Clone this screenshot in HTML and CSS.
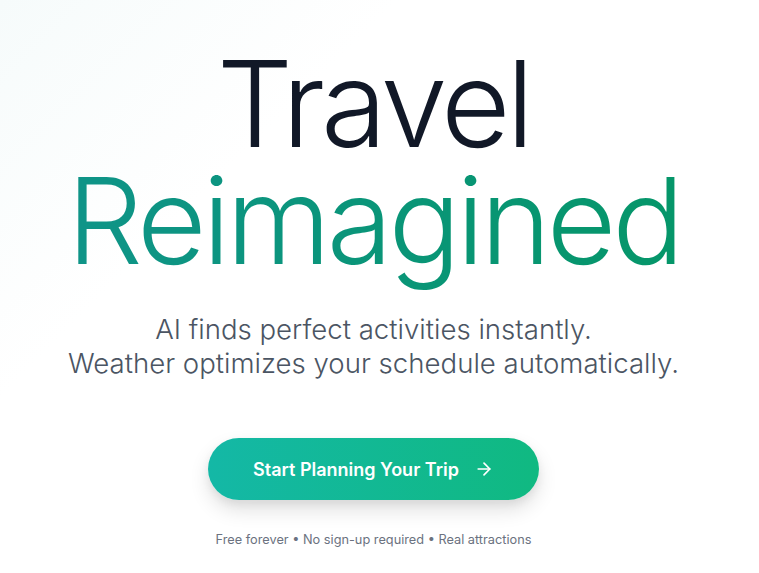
FILE: index.html
```html
<!DOCTYPE html>
<html lang="en">
<head>
<meta charset="utf-8">
<title>Travel Reimagined</title>
<link rel="stylesheet" href="styles.css">
</head>
<body>
<main class="hero">
  <h1 class="title">
    <span class="title-line title-dark">Travel</span>
    <span class="title-line title-accent">Reimagined</span>
  </h1>
  <p class="subtitle">AI finds perfect activities instantly.<br>Weather optimizes your schedule automatically.</p>
  <button class="cta" type="button">
    <span>Start Planning Your Trip</span>
    <svg class="cta-icon" viewBox="0 0 24 24" width="20" height="20" fill="none" stroke="currentColor" stroke-width="2" stroke-linecap="round" stroke-linejoin="round"><path d="M5 12h14"/><path d="M12 5l7 7-7 7"/></svg>
  </button>
  <p class="note">Free forever • No sign-up required • Real attractions</p>
</main>
</body>
</html>
```
FILE: styles.css
```css
html, body {
  margin: 0;
  padding: 0;
}
body {
  background: linear-gradient(135deg, #f6fbfb 0%, #ffffff 30%, #ffffff 100%);
  font-family: Inter, "Noto Sans", sans-serif;
  min-height: 573px;
}
.hero {
  display: flex;
  flex-direction: column;
  align-items: center;
  text-align: center;
  padding: 45px 12px 0 0;
}
.title {
  margin: 0;
  font-weight: 300;
  font-size: 120px;
  line-height: 117px;
  letter-spacing: -4.2px;
  display: flex;
  flex-direction: column;
  align-items: center;
}
.title-line {
  display: block;
}
.title-dark {
  color: #111827;
}
.title-accent {
  padding-bottom: 30px;
  margin-bottom: -30px;
  background: linear-gradient(90deg, #0f9488 0%, #059669 100%);
  -webkit-background-clip: text;
  background-clip: text;
  color: transparent;
}
.subtitle {
  margin: 33px 0 0;
  font-size: 27.6px;
  line-height: 34px;
  font-weight: 300;
  color: #4b5563;
}
.cta {
  margin-top: 58px;
  width: 331px;
  height: 62px;
  border: none;
  border-radius: 31px;
  background: linear-gradient(90deg, #14b8a6 0%, #10b981 100%);
  color: #ffffff;
  font-family: Inter, "Noto Sans", sans-serif;
  font-size: 18px;
  font-weight: 600;
  display: flex;
  align-items: center;
  justify-content: center;
  gap: 15px;
  box-shadow: 0 10px 20px rgba(0, 0, 0, 0.12), 0 4px 8px rgba(0, 0, 0, 0.06);
  cursor: pointer;
}
.cta-icon {
  display: block;
}
.note {
  margin: 30px 0 0;
  font-size: 12.75px;
  line-height: 20px;
  color: #6b7280;
}
```
